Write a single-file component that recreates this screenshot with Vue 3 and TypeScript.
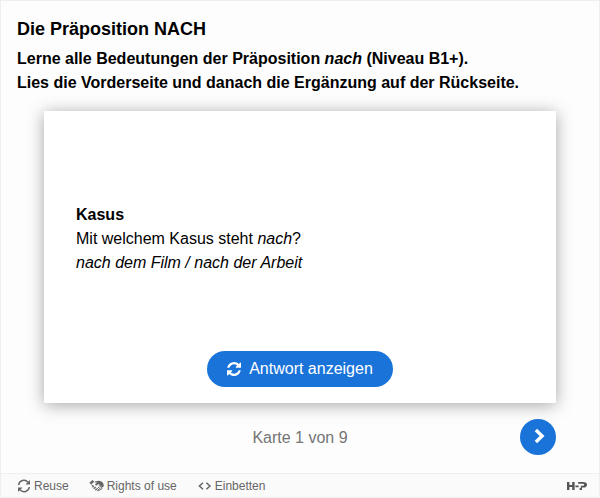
<script setup lang="ts">
import { computed, ref } from 'vue'

const total = 9
const current = ref(1)
const progress = computed(() => `Karte ${current.value} von ${total}`)

function next(): void {
  if (current.value < total) current.value++
}
</script>

<template>
  <div class="frame">
    <main class="content">
      <h1 class="title">Die Präposition NACH</h1>
      <p class="description">
        Lerne alle Bedeutungen der Präposition <em>nach</em> (Niveau B1+).<br />
        Lies die Vorderseite und danach die Ergänzung auf der Rückseite.
      </p>

      <section class="card">
        <div class="question">
          <strong>Kasus</strong>
          <span>Mit welchem Kasus steht <em>nach</em>?</span>
          <em>nach dem Film / nach der Arbeit</em>
        </div>
        <button type="button" class="answer">
          <svg class="turn" viewBox="0 0 1536 1536" aria-hidden="true">
            <path d="M1511 928q0 5-1 7-64 268-268 434.500T764 1536q-146 0-282.500-55T238 1324l-129 129q-19 19-45 19t-45-19-19-45V960q0-26 19-45t45-19h448q26 0 45 19t19 45-19 45l-137 137q71 66 161 102t187 36q134 0 250-65t186-179q11-17 53-117 8-23 30-23h192q13 0 22.500 9.500t9.500 22.500zm25-800v448q0 26-19 45t-45 19h-448q-26 0-45-19t-19-45 19-45l138-138Q969 256 768 256q-134 0-250 65T332 500q-11 17-53 117-8 23-30 23H50q-13 0-22.500-9.500T18 608v-7q65-268 270-434.500T768 0q146 0 284 55.500T1297 212l130-129q19-19 45-19t45 19 19 45z" />
          </svg>
          <span>Antwort anzeigen</span>
        </button>
      </section>

      <nav class="pager">
        <span class="progress">{{ progress }}</span>
        <button type="button" class="next" aria-label="Weiter" @click="next">
          <svg viewBox="0 0 12 16" aria-hidden="true">
            <path d="M1.900 2 8.100 8l-6.200 6" />
          </svg>
        </button>
      </nav>
    </main>

    <footer class="actions">
      <button type="button" class="action">
        <svg class="icon" viewBox="0 0 14 14" aria-hidden="true">
          <path class="line" d="M1.600 6A5.400 5.400 0 0 1 11 3.200M12.400 8A5.400 5.400 0 0 1 3 10.800" />
          <path d="M13 1v4.600H8.400zM1 13V8.400h4.600z" />
        </svg>
        <span>Reuse</span>
      </button>
      <button type="button" class="action">
        <svg class="icon" viewBox="0 0 14 14" aria-hidden="true">
          <path d="M-.6 3.600 2.600 1l1.600 1.800L1 5.600z" />
          <path d="M5.400 2.800Q8.400 1 11 2.200q3.400 1.800 2.600 5.400l-1.400 1L8.600 5 6.400 6.400q-1.200.2-1.400-.8l2-2z" />
          <path class="thin" d="M4.600 3h2M1.600 5.400l1.200 1.800M8.800 6.200l3.200 3q-.2 1.200-1.400.8 0 1.200-1.400 1-.6 1.200-1.600.6l-.6-.6M8 8l2.400 2M7 9.200l2 1.800" />
          <path class="knuckle" d="M2.400 8.200l1.400-1.400M3.800 9.800l1.800-1.800M5.400 11.200l1.400-1.400" />
        </svg>
        <span>Rights of use</span>
      </button>
      <button type="button" class="action">
        <svg class="icon" viewBox="0 0 14 14" aria-hidden="true">
          <path class="line" d="M5 3.800 1.400 7 5 10.200M8.400 3.800 12 7l-3.600 3.200" />
        </svg>
        <span>Einbetten</span>
      </button>
      <a class="brand" href="#" aria-label="H5P">
        <svg viewBox="0 0 20 10" aria-hidden="true">
          <path d="M0 1h2.400v3h2.800V1h2.400v8H5.200V6H2.400v3H0zM8.400 4.400h3.200v1.800H8.400zM11.200 1H16q4 0 4 2.800t-3.600 2.800H15V9h-2.400V7h1.200V4.800h2q1.400 0 1.400-1t-1.400-1h-4.600z" />
        </svg>
      </a>
    </footer>
  </div>
</template>

<style>
body {
  margin: 0;
}
</style>

<style scoped>
.frame {
  box-sizing: border-box;
  min-height: 100vh;
  display: flex;
  flex-direction: column;
  border: 1px solid #eeeeee;
  background: #fdfdfd;
  color: #000;
  font-family: "Liberation Sans", Arial, sans-serif;
  font-size: 16px;
  line-height: 24px;
}

.content {
  flex: 1;
  padding: 16px 16px 0;
}

.title {
  margin: 0 0 6px;
  font-size: 18px;
  line-height: 24px;
}

.description {
  margin: 0;
  font-weight: bold;
}

.card {
  box-sizing: border-box;
  min-height: 292px;
  margin: 16px 27px 0;
  padding: 16px 32px;
  display: flex;
  flex-direction: column;
  align-items: center;
  background: #fff;
  box-shadow: 0 2px 16px rgba(0, 0, 0, 0.35);
}

.question {
  flex: 1;
  align-self: stretch;
  display: flex;
  flex-direction: column;
  justify-content: center;
}

button {
  margin: 0;
  border: 0;
  font: inherit;
  cursor: pointer;
}

.answer {
  display: flex;
  align-items: center;
  gap: 8px;
  height: 36px;
  padding: 0 20px;
  border-radius: 18px;
  background: #1a73d9;
  color: #fff;
}

.turn {
  width: 14px;
  height: 14px;
  fill: currentColor;
}

.pager {
  display: grid;
  grid-template-columns: 1fr auto 1fr;
  align-items: center;
  margin: 16px 27px 0;
}

.progress {
  grid-column: 2;
  padding-top: 2px;
  color: #757575;
}

.next {
  justify-self: end;
  display: flex;
  align-items: center;
  justify-content: center;
  width: 36px;
  height: 36px;
  padding: 0 0 2px 4px;
  border-radius: 50%;
  background: #1a73d9;
}

.next svg {
  width: 12px;
  height: 16px;
  fill: none;
  stroke: #fff;
  stroke-width: 3.4;
}

.actions {
  display: flex;
  align-items: center;
  gap: 21px;
  height: 23px;
  padding: 0 12px 0 16px;
  border-top: 1px solid #eeeeee;
  background: #fafafa;
  color: #666;
  font-size: 12px;
  line-height: 16px;
}

.action {
  display: flex;
  align-items: center;
  gap: 3px;
  padding: 0;
  background: none;
  color: inherit;
}

.icon {
  width: 14px;
  height: 14px;
  overflow: visible;
  fill: currentColor;
}

.line {
  fill: none;
  stroke: currentColor;
  stroke-width: 1.5;
}

.thin {
  fill: none;
  stroke: currentColor;
  stroke-width: 1;
}

.knuckle {
  fill: none;
  stroke: currentColor;
  stroke-width: 1.4;
}

.brand {
  display: flex;
  margin-left: auto;
  color: #555;
}

.brand svg {
  width: 20px;
  height: 10px;
  fill: currentColor;
}
</style>
